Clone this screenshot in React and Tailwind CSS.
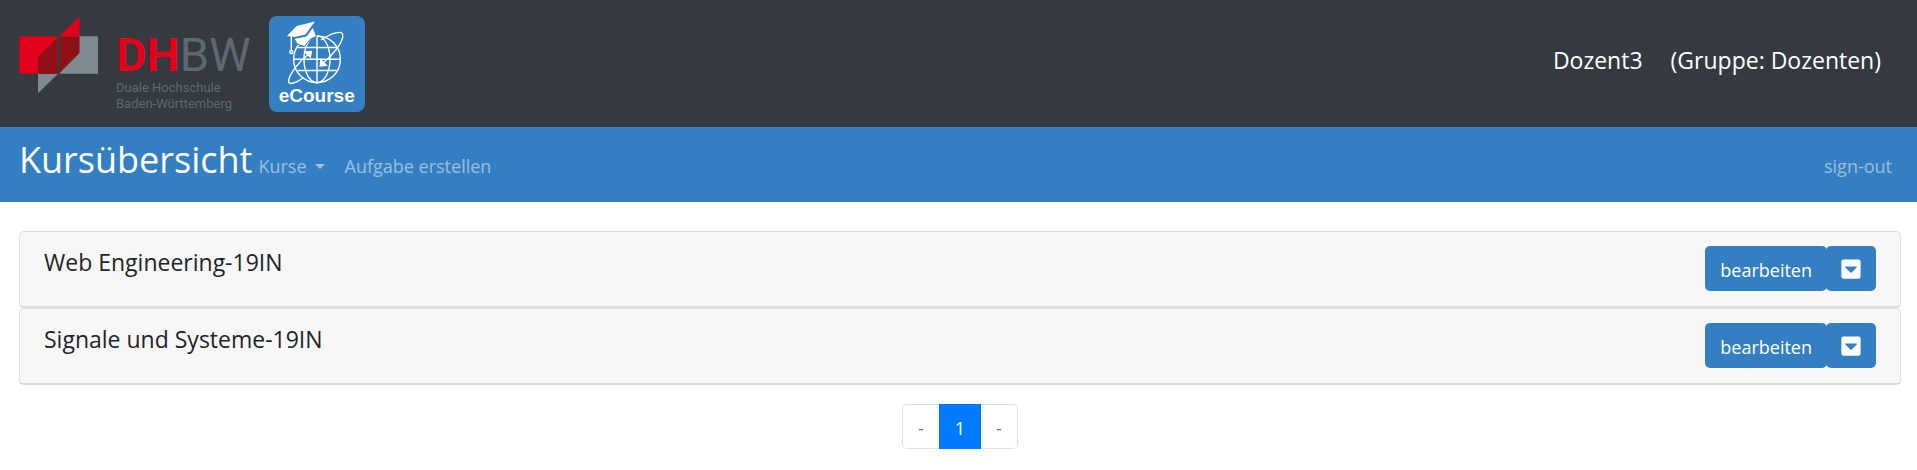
import React from "react";
import { FaCaretSquareDown } from "react-icons/fa";

const courses = ["Web Engineering-19IN", "Signale und Systeme-19IN"];

function DhbwLogo() {
  return (
    <a href="#dhbw" className="flex items-start gap-[17px]">
      <svg viewBox="0 0 80 78" className="h-[78px] w-20" aria-hidden="true">
        <rect x="0.300" y="20.200" width="38" height="37.500" rx="0.800" fill="#e2001a" />
        <rect x="41" y="20.200" width="38" height="37.500" rx="0.800" fill="#7d8a91" />
        <path d="M41 20.200V19.500L60.500.5V20.200z" fill="#e2001a" />
        <path d="M19 57.700H38.300V58.500L19 77.300z" fill="#7d8a91" />
        <path d="M19 41.500 38.300 22V57.700H19z" fill="#8e1016" />
        <path d="M41 20.200H60.500V37L41 56.500z" fill="#8e1016" />
      </svg>
      <span className="block pt-[13px] text-[#5c6971]">
        <span className="block font-[Roboto,sans-serif] text-[47px] leading-[51px]">
          <span className="font-bold text-[#e2001a]">DH</span>BW
        </span>
        <span className="block font-[Roboto,sans-serif] text-[13px] leading-4">
          Duale Hochschule
          <br />
          Baden-Württemberg
        </span>
      </span>
    </a>
  );
}

function ECourseLogo() {
  return (
    <a
      href="#ecourse"
      className="flex size-24 flex-col items-center rounded-lg bg-[#337fc2] text-white"
    >
      <svg
        viewBox="0 0 96 70"
        className="h-[70px] w-24"
        fill="none"
        stroke="currentColor"
        strokeWidth="1.400"
        aria-hidden="true"
      >
        <circle cx="48" cy="43.300" r="23.400" />
        <ellipse cx="48" cy="43.300" rx="13" ry="23.400" />
        <path d="M48 20V66.700M24.600 43.300H71.400M28.500 31.500H67.500M28.500 54.500H67.500" />
        <path d="M52 24C62 17 72 14.500 73.600 18C75.500 25 64 39 53 48" />
        <path d="M34 62C27 67 20.500 69 19.600 66C19 60 29 46 41 37" />
        <path
          d="M42.300 35.500 35.800 36 38.800 38.800 41.300 41.200zM51.300 50 51.800 44 54.500 46.800 57.300 49.300z"
          fill="currentColor"
        />
        <path
          d="M18 20 27.700 10 46 5.500 43.700 8.500 36.500 18.500 25.500 21z"
          fill="currentColor"
          stroke="none"
        />
        <path
          d="M25 22.500 37.500 20 44 11 47.500 20.500 41.500 23 35.500 30.500 28 28z"
          fill="currentColor"
          stroke="#337fc2"
          strokeWidth="1"
        />
        <path d="M22.300 19V34" />
        <circle cx="22.300" cy="36" r="1.500" />
      </svg>
      <span className="font-['Liberation_Sans',Arial,sans-serif] text-[19px] leading-5 font-bold">
        eCourse
      </span>
    </a>
  );
}

function CourseCard({ name }) {
  return (
    <li className="rounded-[5px] border border-black/[0.125] bg-white">
      <div className="flex items-start justify-between rounded-t-[4px] border-b border-black/[0.125] bg-black/[0.03] px-6 pt-[14px] pb-[15px]">
        <h2 className="text-[23px] leading-8">{name}</h2>
        <div className="flex">
          <button
            type="button"
            className="h-[45px] rounded-[5px] bg-[#337fc2] px-[15px] pt-[3px] text-white"
          >
            bearbeiten
          </button>
          <button
            type="button"
            aria-label={`Aktionen für ${name}`}
            className="-ml-px flex h-[45px] items-center rounded-[5px] bg-[#337fc2] px-[14px] pt-px text-white"
          >
            <FaCaretSquareDown className="size-[22px]" />
          </button>
        </div>
      </div>
    </li>
  );
}

export default function App() {
  return (
    <div className="font-['Open_Sans',sans-serif] text-lg text-[#212529]">
      <header className="flex items-start justify-between bg-[#343a40] pt-4 pr-9 pb-[15px] pl-[19px] text-white">
        <div className="flex items-start gap-[18px]">
          <DhbwLogo />
          <ECourseLogo />
        </div>
        <div className="mt-7 flex gap-7 text-[23px] leading-8">
          <span>Dozent3</span>
          <span>(Gruppe: Dozenten)</span>
        </div>
      </header>

      <nav className="flex items-baseline bg-[#337fc2] pt-[6px] pr-[25px] pb-[15px] pl-[19px] text-white/50">
        <h1 className="text-4xl leading-[54px] text-white">Kursübersicht</h1>
        <button type="button" className="ml-[6px] flex items-center gap-2">
          Kurse
          <svg viewBox="0 0 10 5" className="h-[5px] w-[10px]" fill="currentColor" aria-hidden="true">
            <path d="M0 0H10L5 5z" />
          </svg>
        </button>
        <a href="#aufgabe" className="ml-5">
          Aufgabe erstellen
        </a>
        <a href="#sign-out" className="ml-auto">
          sign-out
        </a>
      </nav>

      <main className="pt-[29px] pr-4 pl-[19px]">
        <ul>
          {courses.map((name) => (
            <CourseCard key={name} name={name} />
          ))}
        </ul>
        <div aria-label="Seiten" className="mt-[19px] flex justify-center">
          <button
            type="button"
            disabled
            className="h-[45px] w-[37px] rounded-l-[5px] border border-r-0 border-[#dee2e6] pt-[3px] text-[#6c757d]"
          >
            -
          </button>
          <button type="button" className="h-[45px] w-[42px] bg-[#007bff] pt-[3px] text-white">
            1
          </button>
          <button
            type="button"
            disabled
            className="h-[45px] w-[37px] rounded-r-[5px] border border-l-0 border-[#dee2e6] pt-[3px] text-[#6c757d]"
          >
            -
          </button>
        </div>
      </main>
    </div>
  );
}
